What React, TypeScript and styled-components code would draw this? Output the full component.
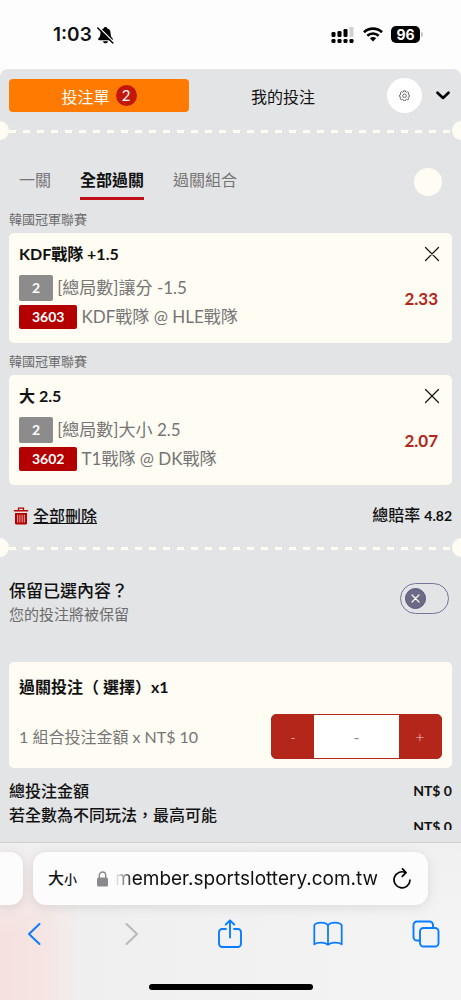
import React, { useState } from "react";
import styled, { createGlobalStyle } from "styled-components";

const color = {
  sheet: "#e3e4e6",
  cream: "#fffcf3",
  orange: "#ff7a00",
  red: "#b4251a",
  deepRed: "#b40000",
  muted: "#757575",
  ink: "#111",
  blue: "#0a7cff",
};

const GlobalStyle = createGlobalStyle`
  * { box-sizing: border-box; }
  body {
    margin: 0;
    background: #fdfdfd;
    color: ${color.ink};
    font-family: Lato, "Noto Sans CJK TC", sans-serif;
    font-size: 16px;
  }
  button, input { font: inherit; color: inherit; margin: 0; padding: 0; border: 0; background: none; }
  button { cursor: pointer; }
  svg { display: block; flex: none; }
`;

const Screen = styled.div`
  display: flex;
  flex-direction: column;
  height: 100vh;
  overflow: hidden;
`;

/* Status bar */
const StatusBar = styled.header`
  display: flex;
  align-items: center;
  justify-content: space-between;
  flex: none;
  height: 69px;
  padding: 0 38px 0 53px;
  font-family: Inter, sans-serif;
`;
const StatusGroup = styled.div<{ $gap: number }>`
  display: flex;
  align-items: center;
  gap: ${(p) => p.$gap}px;
`;
const Clock = styled.time`
  font-size: 19px;
  font-weight: 600;
  line-height: 24px;
`;
const Battery = styled.span`
  display: flex;
  align-items: center;
  gap: 1px;
  &::after {
    content: "";
    width: 2px;
    height: 5px;
    border-radius: 0 2px 2px 0;
    background: #c4c4c4;
  }
`;
const BatteryLevel = styled.span`
  width: 29px;
  border-radius: 5px;
  background: #000;
  color: #fff;
  font-size: 14px;
  font-weight: 700;
  line-height: 17px;
  text-align: center;
`;

/* Bet slip sheet */
const Backdrop = styled.div`
  display: flex;
  flex: 1;
  min-height: 0;
  background: ${color.cream};
`;
const Sheet = styled.main`
  display: flex;
  flex-direction: column;
  flex: 1;
  min-width: 0;
  padding-bottom: 12px;
  border-radius: 8px 8px 0 0;
  background: ${color.sheet};
`;
const SheetHeader = styled.div`
  display: flex;
  align-items: center;
  gap: 14px;
  padding: 9px 11px 8px 9px;
`;
const MainTabs = styled.nav`
  display: flex;
  flex: 1;
  gap: 4px;
`;
const MainTab = styled.button<{ $active?: boolean }>`
  display: flex;
  flex: 1;
  align-items: center;
  justify-content: center;
  gap: 6px;
  height: 33px;
  border-radius: 4px;
  background: ${(p) => (p.$active ? color.orange : "transparent")};
  color: ${(p) => (p.$active ? "#fff" : color.ink)};
`;
const Count = styled.span`
  width: 21px;
  border-radius: 50%;
  background: #c4170c;
  font-size: 15px;
  line-height: 21px;
`;
const RoundButton = styled.button`
  display: grid;
  place-items: center;
  width: 35px;
  height: 35px;
  border-radius: 50%;
  background: #fff;
  color: #555;
`;
const Scroller = styled.div`
  flex: 1;
  min-height: 0;
  overflow-y: auto;
  scrollbar-width: none;
`;
const Perforation = styled.div`
  position: relative;
  height: 19px;
  padding: 9px 9px 0;
  overflow: hidden;
  &::before,
  &::after {
    content: "";
    position: absolute;
    top: 0;
    width: 19px;
    height: 19px;
    border-radius: 50%;
    background: ${color.cream};
  }
  &::before { left: -10px; }
  &::after { right: -10px; }
`;
const Dashes = styled.div`
  height: 3px;
  background: repeating-linear-gradient(90deg, ${color.cream} 0 7px, transparent 7px 14px);
`;
const Section = styled.section`
  padding: 0 9px;
`;
const ModeBar = styled.div`
  display: flex;
  align-items: flex-start;
  gap: 29px;
  padding: 26px 10px 1px;
`;
const ModeTab = styled.button<{ $active?: boolean }>`
  padding-bottom: 3px;
  border-bottom: 3px solid ${(p) => (p.$active ? "#c01015" : "transparent")};
  color: ${(p) => (p.$active ? color.ink : color.muted)};
  font-weight: ${(p) => (p.$active ? 700 : 400)};
  line-height: 28px;
`;
const HelpDot = styled.button`
  width: 28px;
  height: 28px;
  margin: 2px 0 0 auto;
  border-radius: 50%;
  background: ${color.cream};
`;
const League = styled.h2`
  margin: 0;
  padding: 8px 0 4px;
  color: #6c6c6c;
  font-size: 13px;
  font-weight: 400;
  line-height: 20px;
`;
const Card = styled.article`
  padding: 9px 10px;
  border-radius: 5px;
  background: ${color.cream};
`;
const StakeCard = styled(Card)`
  padding-top: 13px;
`;
const CardTitle = styled.h3`
  margin: 0;
  font-size: 16px;
  font-weight: 700;
  line-height: 24px;
`;
const Row = styled.div`
  display: flex;
  align-items: center;
  justify-content: space-between;
`;
const BetHead = styled(Row)`
  padding-right: 2px;
`;
const BetBody = styled(Row)`
  padding: 9px 4px 5px 0;
`;
const BetLines = styled.div`
  display: grid;
  gap: 4px;
`;
const BetLine = styled.p`
  display: flex;
  align-items: center;
  gap: 4px;
  margin: 0;
  color: ${color.muted};
  font-size: 17px;
  line-height: 24px;
`;
const Badge = styled.span<{ $code?: boolean }>`
  padding: 0 13px;
  border-radius: 2px;
  background: ${(p) => (p.$code ? color.deepRed : "#8c8c8c")};
  color: #fff;
  font-size: 14px;
  font-weight: 700;
  line-height: ${(p) => (p.$code ? 24 : 26)}px;
`;
const Odds = styled.strong`
  padding-bottom: 6px;
  color: ${color.red};
  font-size: 17px;
  line-height: 24px;
`;
const IconButton = styled.button`
  display: grid;
  place-items: center;
`;
const SummaryRow = styled(Row)`
  padding: 18px 9px 10px 13px;
  font-weight: 500;
  line-height: 24px;
`;
const DeleteAll = styled.button`
  display: flex;
  align-items: center;
  gap: 4px;
  font-weight: 500;
  text-decoration: underline;
`;
const Amount = styled.span`
  font-size: 14px;
  font-weight: 700;
`;
const KeepRow = styled(Row)`
  padding: 22px 12px 37px 9px;
`;
const KeepLabel = styled.label`
  font-size: 17px;
  font-weight: 500;
  line-height: 24px;
`;
const KeepHint = styled.span`
  display: block;
  color: #6c6c6c;
  font-size: 15px;
  font-weight: 400;
  line-height: 22px;
`;
const Switch = styled.span<{ $on: boolean }>`
  position: relative;
  width: 49px;
  height: 31px;
  margin-bottom: 8px;
  svg {
    position: absolute;
    top: 5px;
    left: ${(p) => (p.$on ? 23 : 5)}px;
    pointer-events: none;
  }
`;
const SwitchInput = styled.input`
  display: block;
  appearance: none;
  width: 100%;
  height: 100%;
  border: 1px solid #77739a;
  border-radius: 16px;
`;
const StakeRow = styled(Row)`
  padding-top: 15px;
`;
const StakeLabel = styled.label`
  color: ${color.muted};
  line-height: 24px;
`;
const Stepper = styled.div`
  display: flex;
  width: 171px;
  height: 45px;
  border: 1px solid ${color.red};
  border-radius: 5px;
  background: ${color.red};
  overflow: hidden;
`;
const StepButton = styled.button`
  flex: 1;
  color: #f0c9c4;
  font-weight: 300;
`;
const StakeInput = styled.input`
  width: 85px;
  background: #fff;
  text-align: center;
  &::placeholder { color: #8a8a8a; opacity: 1; }
`;
const Totals = styled.dl`
  margin: 0;
  padding: 11px 9px 0;
  line-height: 24px;
  font-weight: 500;
`;
const TotalLabel = styled.dt`
  width: 214px;
`;
const TotalValue = styled.dd`
  margin: 0;
  font-size: 14px;
  font-weight: 700;
`;

/* Browser chrome */
const Browser = styled.footer`
  flex: none;
  border-top: 1px solid #cfd0d2;
  background: linear-gradient(180deg, #f0f0f0 0, #f0f0f000 90px),
    linear-gradient(90deg, #f5e2e0 0, #f5e4e2 40px, #f0efef 82px, #f4f4f4 100%);
`;
const AddressRow = styled.div`
  display: flex;
  gap: 10px;
  padding: 9px 33px 0 0;
`;
const PreviousTab = styled.div`
  width: 23px;
  border-radius: 0 13px 13px 0;
  background: #fcfcfc;
  box-shadow: 0 2px 12px #0000001a;
`;
const AddressBar = styled.div`
  display: flex;
  flex: 1;
  align-items: center;
  height: 53px;
  padding: 0 17px 0 15px;
  border-radius: 13px;
  background: #fcfcfc;
  box-shadow: 0 2px 12px #0000001a;
`;
const TextSize = styled.button`
  font-weight: 500;
  line-height: 24px;
  margin-right: 20px;
`;
const SmallGlyph = styled.span`
  font-size: 13px;
`;
const Url = styled.button`
  flex: 1;
  margin: 0 16px 0 7px;
  min-width: 0;
  font-family: Inter, sans-serif;
  font-size: 19px;
  line-height: 28px;
  text-align: right;
  white-space: nowrap;
  mask-image: linear-gradient(90deg, transparent 0, #000 18px);
`;
const Toolbar = styled.nav`
  display: flex;
  align-items: center;
  justify-content: space-between;
  height: 57px;
  padding: 0 15px 0 14px;
  color: ${color.blue};
`;
const ToolButton = styled.button`
  display: grid;
  place-items: center;
  width: 40px;
  height: 40px;
  &:disabled { color: #b9b9bb; }
`;
const HomeIndicator = styled.div`
  width: 164px;
  height: 6px;
  margin: 22px auto 10px;
  border-radius: 3px;
  background: #000;
`;

const CloseIcon = () => (
  <svg width="16" height="16" viewBox="0 0 16 16" stroke="#111" strokeWidth="1.2" strokeLinecap="round">
    <path d="M1.5 1.5l13 13M14.5 1.5l-13 13" />
  </svg>
);

const BellOffIcon = () => (
  <svg width="17" height="18" viewBox="0 0 17 18">
    <path
      d="M8.5 1c.9 0 1.5.5 1.6 1.3 2.3.7 3.4 2.5 3.5 4.9.1 2.8.4 3.5 1.9 5.1.8.9.3 1.9-.8 1.9H2.3c-1.1 0-1.6-1-.8-1.9C3 10.7 3.3 10 3.4 7.2c.1-2.4 1.2-4.2 3.5-4.900C7 1.500 7.600 1 8.500 1zM6 15.200h5c-.2 1.300-1.200 2.100-2.500 2.100S6.200 16.500 6 15.200z"
      fill="#000"
    />
    <path d="M1.800 1.200l14.500 14.500" stroke="#fdfdfd" strokeWidth="1.4" />
    <path d="M.8 2l15 15" stroke="#000" strokeWidth="1.5" strokeLinecap="round" />
  </svg>
);

const SignalIcon = () => (
  <svg width="24" height="16" viewBox="0 0 24 16">
    {[0, 6, 12, 18].map((x) => (
      <rect key={x} x={x + 0.5} y="12" width="4" height="4" rx="1.3" />
    ))}
    <rect x=".5" y="5" width="4" height="5" rx="1.3" />
    <rect x="6.5" y="4" width="4" height="6" rx="1.3" />
    <rect x="12.5" y="2" width="4" height="8" rx="1.3" />
    <rect x="18.5" y="0" width="4" height="10" rx="1.3" fill="#d0d0d0" />
  </svg>
);

const WifiIcon = () => (
  <svg width="20" height="15" viewBox="0 0 20 15" fill="none" stroke="#000" strokeWidth="2.6">
    <path d="M1 5.200C6 .4 14 .4 19 5.200" />
    <path d="M4.300 8.800c3.300-3 8.100-3 11.400 0" />
    <path d="M10 14.600l-3.200-3.300c1.800-1.600 4.600-1.600 6.400 0z" fill="#000" stroke="none" />
  </svg>
);

const GearIcon = () => (
  <svg width="11" height="11" viewBox="0 0 22 22" fill="none" stroke="currentColor" strokeWidth="1.7" strokeLinejoin="round">
    <path d="M9.300 1.500h3.400l.6 2.500 1.700.7 2.200-1.300 2.400 2.400-1.300 2.200.7 1.700 2 .5v3l-2 .5-.7 1.700 1.300 2.200-2.400 2.400-2.200-1.300-1.700.7-.6 2.100H9.300L8.700 19.400 7 18.700 4.800 20l-2.400-2.400 1.300-2.200L3 13.700l-2-.5v-3l2-.5L3.700 8 2.400 5.800l2.400-2.400L7 4.700 8.700 4z" />
    <circle cx="11" cy="11.5" r="3.6" />
  </svg>
);

const ChevronDown = () => (
  <svg width="14" height="9" viewBox="0 0 14 9" fill="none" stroke="#000" strokeWidth="2.6" strokeLinecap="round" strokeLinejoin="round">
    <path d="M1.500 1.700L7 7l5.500-5.300" />
  </svg>
);

const TrashIcon = () => (
  <svg width="16" height="18" viewBox="0 0 16 18" fill="none" stroke="#b40000">
    <path d="M2 6h12v10.200a1.300 1.300 0 0 1-1.300 1.300H3.300a1.300 1.300 0 0 1-1.300-1.300z" fill="#b40000" stroke="none" />
    <path d="M1.500 3.800h13" strokeWidth="1.6" strokeLinecap="round" />
    <path d="M5.500 3.500V1.200h5v2.300" strokeWidth="1.3" />
    <path d="M4.700 7.700v7.800M6.900 7.700v7.800M9.100 7.700v7.800M11.300 7.700v7.800" stroke="#f0d8d8" strokeWidth=".8" />
  </svg>
);

const KnobIcon = () => (
  <svg width="21" height="21" viewBox="0 0 21 21">
    <circle cx="10.5" cy="10.5" r="10" fill="#6b6b86" stroke="#55557c" />
    <path d="M7 7l7 7M14 7l-7 7" stroke="#fff" strokeWidth="1.2" strokeLinecap="round" />
  </svg>
);

const LockIcon = () => (
  <svg width="11" height="16" viewBox="0 0 11 16">
    <rect y="6.5" width="11" height="9" rx="1.5" fill="#8a8a8e" />
    <path d="M2.300 7V4.200a3.200 3.200 0 0 1 6.400 0V7" fill="none" stroke="#8a8a8e" strokeWidth="1.4" />
  </svg>
);

const ReloadIcon = () => (
  <svg width="18" height="22" viewBox="0 0 18 22" fill="none" stroke="#000" strokeWidth="1.7" strokeLinecap="round" strokeLinejoin="round">
    <path d="M12.500 4.600A8 8 0 1 0 17 12.200" />
    <path d="M9.500 .9L13 4.600 9.300 8.300" />
  </svg>
);

const Arrow = ({ flip }: { flip?: boolean }) => (
  <svg width="14" height="24" viewBox="0 0 14 24" fill="none" stroke="currentColor" strokeWidth="2" strokeLinecap="round" strokeLinejoin="round">
    <path d={flip ? "M1.500 2L12 12 1.500 22" : "M12.500 2L2 12l10.500 10"} />
  </svg>
);

const ShareIcon = () => (
  <svg width="24" height="30" viewBox="0 0 24 30" fill="none" stroke="currentColor" strokeWidth="1.9" strokeLinecap="round" strokeLinejoin="round">
    <path d="M8 10H4.200A3.200 3.200 0 0 0 1 13.200v11.600A3.200 3.200 0 0 0 4.200 28h15.600a3.200 3.200 0 0 0 3.200-3.200V13.200A3.200 3.200 0 0 0 19.800 10H16" />
    <path d="M12 18.500V1.500M7.800 5.500L12 1.300l4.200 4.200" />
  </svg>
);

const BookIcon = () => (
  <svg width="30" height="26" viewBox="0 0 30 26" fill="none" stroke="currentColor" strokeWidth="1.8" strokeLinejoin="round">
    <path d="M15 4.500v19.200M15 4.500C12.500.8 3.500.8 1.300 4.300v19c2.800-2.200 11-2.300 13.700.5 2.700-2.800 10.900-2.700 13.700-.5v-19C26.500.8 17.500.8 15 4.500z" />
  </svg>
);

const TabsIcon = () => (
  <svg width="28" height="28" viewBox="0 0 28 28" fill="none" stroke="currentColor" strokeWidth="1.9">
    <rect x="8" y="8" width="18.5" height="18.5" rx="3.5" />
    <path d="M8 20.500H5A3.500 3.500 0 0 1 1.500 17V5A3.500 3.500 0 0 1 5 1.500h12.500A3.500 3.500 0 0 1 21 5v3" />
  </svg>
);

interface Bet {
  league: string;
  pick: string;
  market: string;
  code: string;
  match: string;
  odds: string;
}

const bets: Bet[] = [
  { league: "韓國冠軍聯賽", pick: "KDF戰隊 +1.5", market: "[總局數]讓分 -1.5", code: "3603", match: "KDF戰隊 @ HLE戰隊", odds: "2.33" },
  { league: "韓國冠軍聯賽", pick: "大 2.5", market: "[總局數]大小 2.5", code: "3602", match: "T1戰隊 @ DK戰隊", odds: "2.07" },
];

const BetCard = ({ bet }: { bet: Bet }) => (
  <>
    <League>{bet.league}</League>
    <Card>
      <BetHead>
        <CardTitle>{bet.pick}</CardTitle>
        <IconButton aria-label="移除">
          <CloseIcon />
        </IconButton>
      </BetHead>
      <BetBody>
        <BetLines>
          <BetLine>
            <Badge>2</Badge>
            {bet.market}
          </BetLine>
          <BetLine>
            <Badge $code>{bet.code}</Badge>
            {bet.match}
          </BetLine>
        </BetLines>
        <Odds>{bet.odds}</Odds>
      </BetBody>
    </Card>
  </>
);

export default function App() {
  const [keep, setKeep] = useState(false);
  const [stake, setStake] = useState("");
  const step = (by: number) => {
    const next = Math.max(0, Number(stake || 0) + by);
    setStake(next ? String(next) : "");
  };

  return (
    <Screen>
      <GlobalStyle />
      <StatusBar>
        <StatusGroup $gap={5}>
          <Clock>1:03</Clock>
          <BellOffIcon />
        </StatusGroup>
        <StatusGroup $gap={8}>
          <SignalIcon />
          <WifiIcon />
          <Battery>
            <BatteryLevel>96</BatteryLevel>
          </Battery>
        </StatusGroup>
      </StatusBar>

      <Backdrop>
        <Sheet>
          <SheetHeader>
            <MainTabs>
              <MainTab $active>
                投注單<Count>2</Count>
              </MainTab>
              <MainTab>我的投注</MainTab>
            </MainTabs>
            <RoundButton aria-label="設定">
              <GearIcon />
            </RoundButton>
            <IconButton aria-label="收合">
              <ChevronDown />
            </IconButton>
          </SheetHeader>

          <Scroller>
            <Perforation>
              <Dashes />
            </Perforation>
            <Section>
              <ModeBar>
                <ModeTab>一關</ModeTab>
                <ModeTab $active>全部過關</ModeTab>
                <ModeTab>過關組合</ModeTab>
                <HelpDot aria-label="說明" />
              </ModeBar>
              {bets.map((bet) => (
                <BetCard key={bet.code} bet={bet} />
              ))}
            </Section>
            <SummaryRow>
              <DeleteAll>
                <TrashIcon />
                全部刪除
              </DeleteAll>
              <span>
                總賠率 <Amount>4.82</Amount>
              </span>
            </SummaryRow>
            <Perforation>
              <Dashes />
            </Perforation>
            <KeepRow>
              <KeepLabel htmlFor="keep">
                保留已選內容？
                <KeepHint>您的投注將被保留</KeepHint>
              </KeepLabel>
              <Switch $on={keep}>
                <SwitchInput id="keep" type="checkbox" checked={keep} onChange={(e) => setKeep(e.target.checked)} />
                <KnobIcon />
              </Switch>
            </KeepRow>
            <Section>
              <StakeCard>
                <CardTitle>過關投注（ 選擇）x1</CardTitle>
                <StakeRow>
                  <StakeLabel htmlFor="stake">1 組合投注金額 x NT$ 10</StakeLabel>
                  <Stepper>
                    <StepButton aria-label="減少" onClick={() => step(-1)}>
                      -
                    </StepButton>
                    <StakeInput id="stake" inputMode="numeric" placeholder="-" value={stake} onChange={(e) => setStake(e.target.value.replace(/\D/g, ""))} />
                    <StepButton aria-label="增加" onClick={() => step(1)}>
                      +
                    </StepButton>
                  </Stepper>
                </StakeRow>
              </StakeCard>
            </Section>
            <Totals>
              <Row>
                <TotalLabel>總投注金額</TotalLabel>
                <TotalValue>NT$ 0</TotalValue>
              </Row>
              <Row>
                <TotalLabel>若全數為不同玩法，最高可能之彩金</TotalLabel>
                <TotalValue>NT$ 0</TotalValue>
              </Row>
            </Totals>
          </Scroller>
        </Sheet>
      </Backdrop>

      <Browser>
        <AddressRow>
          <PreviousTab />
          <AddressBar>
            <TextSize>
              大<SmallGlyph>小</SmallGlyph>
            </TextSize>
            <LockIcon />
            <Url>member.sportslottery.com.tw</Url>
            <IconButton aria-label="重新載入">
              <ReloadIcon />
            </IconButton>
          </AddressBar>
        </AddressRow>
        <Toolbar>
          <ToolButton aria-label="上一頁">
            <Arrow />
          </ToolButton>
          <ToolButton aria-label="下一頁" disabled>
            <Arrow flip />
          </ToolButton>
          <ToolButton aria-label="分享">
            <ShareIcon />
          </ToolButton>
          <ToolButton aria-label="書籤">
            <BookIcon />
          </ToolButton>
          <ToolButton aria-label="分頁">
            <TabsIcon />
          </ToolButton>
        </Toolbar>
        <HomeIndicator />
      </Browser>
    </Screen>
  );
}
